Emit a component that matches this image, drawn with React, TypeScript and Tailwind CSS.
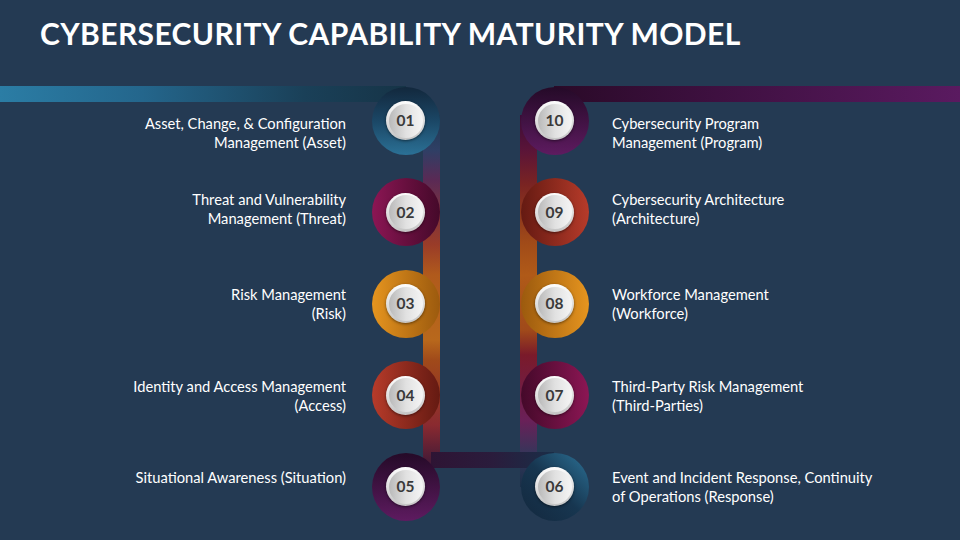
type Item = {
  n: string;
  lines: string[];
  ring: string;
  shift: string;
};

const leftItems: Item[] = [
  {
    n: "01",
    lines: ["Asset, Change, & Configuration", "Management (Asset)"],
    ring: "bg-linear-to-b from-[#12283d] via-[#1b4766] to-[#2b7196]",
    shift: "mt-[24px]",
  },
  {
    n: "02",
    lines: ["Threat and Vulnerability", "Management (Threat)"],
    ring: "bg-linear-to-r from-[#8c1654] to-[#45092a]",
    shift: "-mt-[6px]",
  },
  {
    n: "03",
    lines: ["Risk Management", "(Risk)"],
    ring: "bg-linear-to-r from-[#e6951f] to-[#9c5a0e]",
    shift: "",
  },
  {
    n: "04",
    lines: ["Identity and Access Management", "(Access)"],
    ring: "bg-linear-to-r from-[#b73b2a] to-[#651a12]",
    shift: "mt-[2px]",
  },
  {
    n: "05",
    lines: ["Situational Awareness (Situation)"],
    ring: "bg-linear-to-b from-[#250a28] to-[#5e1b60]",
    shift: "",
  },
];

const rightItems: Item[] = [
  {
    n: "10",
    lines: ["Cybersecurity Program", "Management (Program)"],
    ring: "bg-linear-to-b from-[#250a28] to-[#5e1b60]",
    shift: "mt-[24px]",
  },
  {
    n: "09",
    lines: ["Cybersecurity Architecture", "(Architecture)"],
    ring: "bg-linear-to-r from-[#651a12] to-[#b73b2a]",
    shift: "-mt-[6px]",
  },
  {
    n: "08",
    lines: ["Workforce Management", "(Workforce)"],
    ring: "bg-linear-to-r from-[#9c5a0e] to-[#e6951f]",
    shift: "",
  },
  {
    n: "07",
    lines: ["Third-Party Risk Management", "(Third-Parties)"],
    ring: "bg-linear-to-r from-[#45092a] to-[#8c1654]",
    shift: "mt-[2px]",
  },
  {
    n: "06",
    lines: ["Event and Incident Response, Continuity", "of Operations (Response)"],
    ring: "bg-linear-to-tr from-[#13283e] via-[#173650] to-[#2c7398]",
    shift: "",
  },
];

function Ring({ n, ring }: { n: string; ring: string }) {
  return (
    <div className={`flex h-[68px] w-[68px] items-center justify-center justify-self-center self-center rounded-full ${ring}`}>
      <div className="flex h-[39px] w-[39px] items-center justify-center rounded-full bg-linear-to-b from-[#fdfdfd] to-[#c4c4c4] shadow-[0_1px_3px_rgba(0,0,0,0.5)]">
        <div className="flex h-[34px] w-[34px] items-center justify-center rounded-full bg-linear-to-r from-[#b9b9b9] via-[#e1e1e1] to-[#f5f5f5]">
          <span className="text-[15.5px] font-bold leading-none text-[#3a3a3a]">{n}</span>
        </div>
      </div>
    </div>
  );
}

function Label({ item, align }: { item: Item; align: "left" | "right" }) {
  return (
    <div
      className={`flex h-[38px] flex-col self-center text-[14.7px] leading-[19px] text-white ${item.shift} ${
        align === "right" ? "items-end pr-[25px] text-right" : "items-start pl-[23px] text-left"
      }`}
    >
      {item.lines.map((l) => (
        <span key={l} className="whitespace-nowrap">
          {l}
        </span>
      ))}
    </div>
  );
}

// connector bars behind the rings
function Connectors() {
  return (
    <svg className="absolute inset-0 h-full w-full" viewBox="0 0 960 540">
      <defs>
        <linearGradient id="tl" x1="0" y1="0" x2="406" y2="0" gradientUnits="userSpaceOnUse">
          <stop offset="0" stopColor="#2b7da5" />
          <stop offset="0.35" stopColor="#24668c" />
          <stop offset="0.75" stopColor="#1a4058" />
          <stop offset="1" stopColor="#163447" />
        </linearGradient>
        <linearGradient id="tr" x1="554" y1="0" x2="960" y2="0" gradientUnits="userSpaceOnUse">
          <stop offset="0" stopColor="#2a0a28" />
          <stop offset="0.4" stopColor="#3e1040" />
          <stop offset="1" stopColor="#5a1a60" />
        </linearGradient>
        <linearGradient id="lv" x1="0" y1="115" x2="0" y2="468" gradientUnits="userSpaceOnUse">
          <stop offset="0" stopColor="#1c3850" />
          <stop offset="0.1" stopColor="#2f3f65" />
          <stop offset="0.184" stopColor="#5a2a55" />
          <stop offset="0.368" stopColor="#9a3c28" />
          <stop offset="0.453" stopColor="#b05a1c" />
          <stop offset="0.637" stopColor="#b8681c" />
          <stop offset="0.694" stopColor="#a04a1a" />
          <stop offset="0.878" stopColor="#8a2a30" />
          <stop offset="1" stopColor="#3a1838" />
        </linearGradient>
        <linearGradient id="rv" x1="0" y1="115" x2="0" y2="487" gradientUnits="userSpaceOnUse">
          <stop offset="0" stopColor="#3a0c38" />
          <stop offset="0.094" stopColor="#5a1438" />
          <stop offset="0.188" stopColor="#7a2422" />
          <stop offset="0.349" stopColor="#a24c18" />
          <stop offset="0.43" stopColor="#b05a18" />
          <stop offset="0.578" stopColor="#a04a1a" />
          <stop offset="0.645" stopColor="#7a1a2a" />
          <stop offset="0.82" stopColor="#6a2058" />
          <stop offset="0.914" stopColor="#34365a" />
          <stop offset="1" stopColor="#1a3048" />
        </linearGradient>
        <linearGradient id="bt" x1="431" y1="0" x2="554" y2="0" gradientUnits="userSpaceOnUse">
          <stop offset="0" stopColor="#2e1434" />
          <stop offset="0.5" stopColor="#2a1c3c" />
          <stop offset="1" stopColor="#1a2e48" />
        </linearGradient>
      </defs>
      <rect x="0" y="86" width="406" height="16" fill="url(#tl)" />
      <rect x="554" y="86" width="406" height="16" fill="url(#tr)" />
      <rect x="423" y="115" width="17" height="353" fill="url(#lv)" />
      <rect x="520" y="115" width="17" height="372" fill="url(#rv)" />
      <rect x="431" y="452" width="123" height="16" fill="url(#bt)" />
    </svg>
  );
}

export default function App() {
  return (
    <div className="relative h-[540px] w-[960px] overflow-hidden bg-[#243a53] font-[Lato,sans-serif]">
      <Connectors />
      <div className="relative flex flex-col">
        <h1 className="pl-[40px] pt-[18px] text-[30px] font-bold leading-none tracking-[0.4px] text-white">
          CYBERSECURITY CAPABILITY MATURITY MODEL
        </h1>
        <div className="mt-[27px] grid grid-cols-[371px_69px_80px_69px_1fr] grid-rows-[repeat(5,91.5px)]">
          {leftItems.map((l, i) => {
            const r = rightItems[i];
            return [
              <Label key={l.n + "t"} item={l} align="right" />,
              <Ring key={l.n + "r"} n={l.n} ring={l.ring} />,
              <div key={l.n + "s"} />,
              <Ring key={r.n + "r"} n={r.n} ring={r.ring} />,
              <Label key={r.n + "t"} item={r} align="left" />,
            ];
          })}
        </div>
      </div>
    </div>
  );
}
